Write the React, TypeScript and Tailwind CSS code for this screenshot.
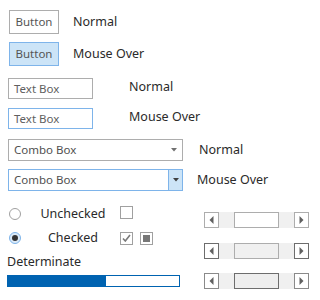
import React from "react";

const font = { fontFamily: '"Noto Sans", "Open Sans", sans-serif' };

function Tri({ dir, color = "#606060" }: { dir: "left" | "right" | "down"; color?: string }) {
  if (dir === "down")
    return (
      <svg width="6" height="4" viewBox="0 0 6 4">
        <polygon points="0,0 6,0 3,3.5" fill={color} />
      </svg>
    );
  return (
    <svg width="5" height="8" viewBox="0 0 5 8">
      {dir === "left" ? (
        <polygon points="4.5,0 4.5,8 0.5,4" fill={color} />
      ) : (
        <polygon points="0.5,0 0.5,8 4.5,4" fill={color} />
      )}
    </svg>
  );
}

function ScrollBar({ btn, thumbBorder, thumbBg }: { btn: string; thumbBorder: string; thumbBg: string }) {
  return (
    <div className="flex h-[16px] w-[105px] bg-[#f0f0f0]">
      <div className="flex h-[16px] w-[15px] items-center justify-center border bg-white" style={{ borderColor: btn }}>
        <Tri dir="left" />
      </div>
      <div className="ml-[15px] h-[16px] w-[45px] border" style={{ borderColor: thumbBorder, background: thumbBg }} />
      <div className="ml-auto flex h-[16px] w-[15px] items-center justify-center border bg-white" style={{ borderColor: btn }}>
        <Tri dir="right" />
      </div>
    </div>
  );
}

export default function App() {
  return (
    <div className="relative h-[300px] w-[320px] overflow-hidden bg-white text-[12.5px] text-[#2a2a2a]" style={font}>
      <div className="flex flex-col pl-[9px] pt-[10px]">
        <div className="flex h-[24px] items-center">
          <div className="flex h-[24px] w-[50px] items-center justify-center border border-[#adadad] text-[11.5px] text-[#555]">Button</div>
          <span className="ml-[14px]">Normal</span>
        </div>
        <div className="mt-[8px] flex h-[24px] items-center">
          <div className="flex h-[24px] w-[50px] items-center justify-center border border-[#7eb4ea] bg-[#cce4f7] text-[11.5px] text-[#555]">Button</div>
          <span className="ml-[14px]">Mouse Over</span>
        </div>
      </div>

      <div className="flex flex-col pl-[8px] pt-[12px]">
        <div className="flex h-[21px] items-center">
          <div className="flex h-[21px] w-[85px] items-center border border-[#adadad] pl-[5px] text-[11.5px] text-[#606060]">Text Box</div>
          <span className="ml-[36px] -mt-[2px]">Normal</span>
        </div>
        <div className="mt-[9px] flex h-[21px] items-center">
          <div className="flex h-[21px] w-[85px] items-center border border-[#7eb4ea] pl-[5px] text-[11.5px] text-[#606060]">Text Box</div>
          <span className="ml-[36px] -mt-[2px]">Mouse Over</span>
        </div>
      </div>

      <div className="flex flex-col pl-[8px] pt-[10px]">
        <div className="flex h-[22px] items-center">
          <div className="flex h-[22px] w-[175px] items-center border border-[#adadad] pl-[5px] text-[11.5px] text-[#505050]">
            <span className="flex-1">Combo Box</span>
            <div className="flex w-[14px] items-center justify-center pr-[2px]">
              <Tri dir="down" color="#707070" />
            </div>
          </div>
          <span className="ml-[16px]">Normal</span>
        </div>
        <div className="mt-[8px] flex h-[22px] items-center">
          <div className="flex h-[22px] w-[175px] items-center border border-[#7eb4ea] pl-[5px] text-[11.5px] text-[#505050]">
            <span className="flex-1">Combo Box</span>
            <div className="flex h-full w-[14px] items-center justify-center border-l border-[#7eb4ea] bg-[#cce4f7]">
              <Tri dir="down" color="#404040" />
            </div>
          </div>
          <span className="ml-[14px]">Mouse Over</span>
        </div>
      </div>

      <div className="mt-[11px] flex">
        <div className="flex w-[204px] flex-col pl-[7px]">
          <div className="flex h-[24px] items-center">
            <div className="ml-[2px] h-[12px] w-[12px] rounded-full border border-[#a0a0a0] bg-white" />
            <span className="w-[99px] pl-[5px] text-center">Unchecked</span>
            <div className="-mt-[4px] h-[13px] w-[13px] border border-[#a0a0a0] bg-white" />
          </div>
          <div className="flex h-[24px] items-center">
            <div className="ml-[2px] flex h-[12px] w-[12px] items-center justify-center rounded-full border border-[#7eb4ea] bg-[#dbeaf8]">
              <div className="h-[6px] w-[6px] rounded-full bg-[#333]" />
            </div>
            <span className="w-[99px] pl-[5px] text-center">Checked</span>
            <div className="flex h-[13px] w-[13px] items-center justify-center border border-[#a0a0a0] bg-white">
              <svg width="9" height="8" viewBox="0 0 9 8">
                <polyline points="1,4.5 3.3,7 8,1" fill="none" stroke="#7a7a7a" strokeWidth="1.6" />
              </svg>
            </div>
            <div className="ml-[7px] flex h-[13px] w-[13px] items-center justify-center border border-[#a0a0a0] bg-white">
              <div className="h-[7px] w-[7px] bg-[#777]" />
            </div>
          </div>
          <div className="flex h-[24px] items-center pt-[1px]">Determinate</div>
          <div className="mt-[1px] h-[12px] w-[173px] border border-[#0063b1] bg-white">
            <div className="h-full w-[98px] bg-[#0063b1]" />
          </div>
        </div>
        <div className="flex flex-col pt-[10px]">
          <ScrollBar btn="#adadad" thumbBorder="#adadad" thumbBg="#ffffff" />
          <div className="mt-[15px]">
            <ScrollBar btn="#6d6d6d" thumbBorder="#adadad" thumbBg="#f0f0f0" />
          </div>
          <div className="mt-[14px]">
            <ScrollBar btn="#8a8a8a" thumbBorder="#6d6d6d" thumbBg="#eeeeee" />
          </div>
        </div>
      </div>
    </div>
  );
}
